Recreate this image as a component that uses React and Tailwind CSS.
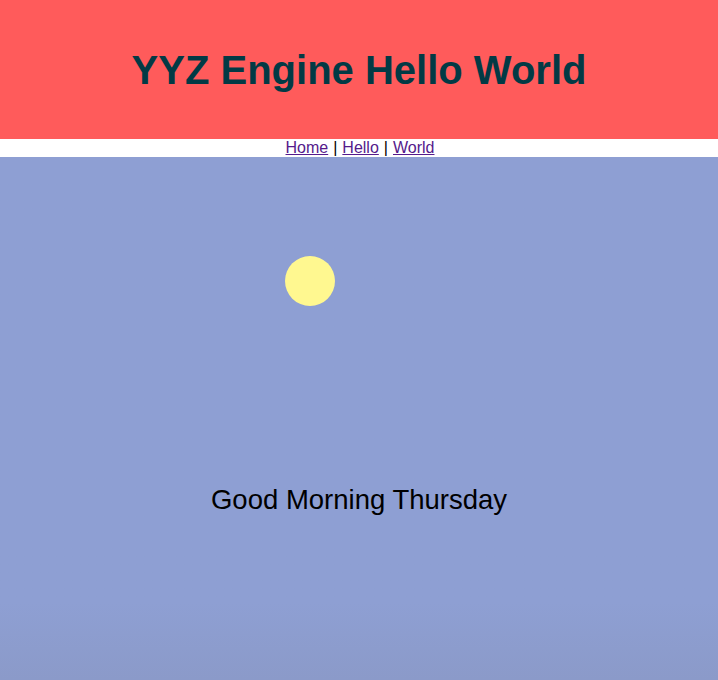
export default function App() {
  return (
    <div className="min-h-screen flex flex-col bg-white" style={{ fontFamily: '"Liberation Sans", Arial, sans-serif' }}>
      {/* Header */}
      <header className="h-[139px] bg-[#ff5b5b] flex items-center justify-center">
        <h1 className="text-[40px] font-bold leading-none text-[#023a45]">YYZ Engine Hello World</h1>
      </header>

      {/* Nav */}
      <nav className="h-[18px] flex items-center justify-center text-[16px] leading-[18px] text-black pl-[2px]">
        <a href="#" className="underline text-[#551a8b]">Home</a>
        <span className="px-[5px]">|</span>
        <a href="#" className="underline text-[#551a8b]">Hello</a>
        <span className="px-[5px]">|</span>
        <a href="#" className="underline text-[#551a8b]">World</a>
      </nav>

      {/* Scene */}
      <main className="relative flex-1 min-h-[523px] bg-gradient-to-b from-[#8e9fd3] from-85% to-[#8b9ac9] pt-[327px]">
        <div className="absolute left-[285px] top-[99px] w-[50px] h-[50px] rounded-full bg-[#fff890]" />
        <p className="text-center text-[27.5px] leading-[31px] text-black">Good Morning Thursday</p>
      </main>
    </div>
  );
}
